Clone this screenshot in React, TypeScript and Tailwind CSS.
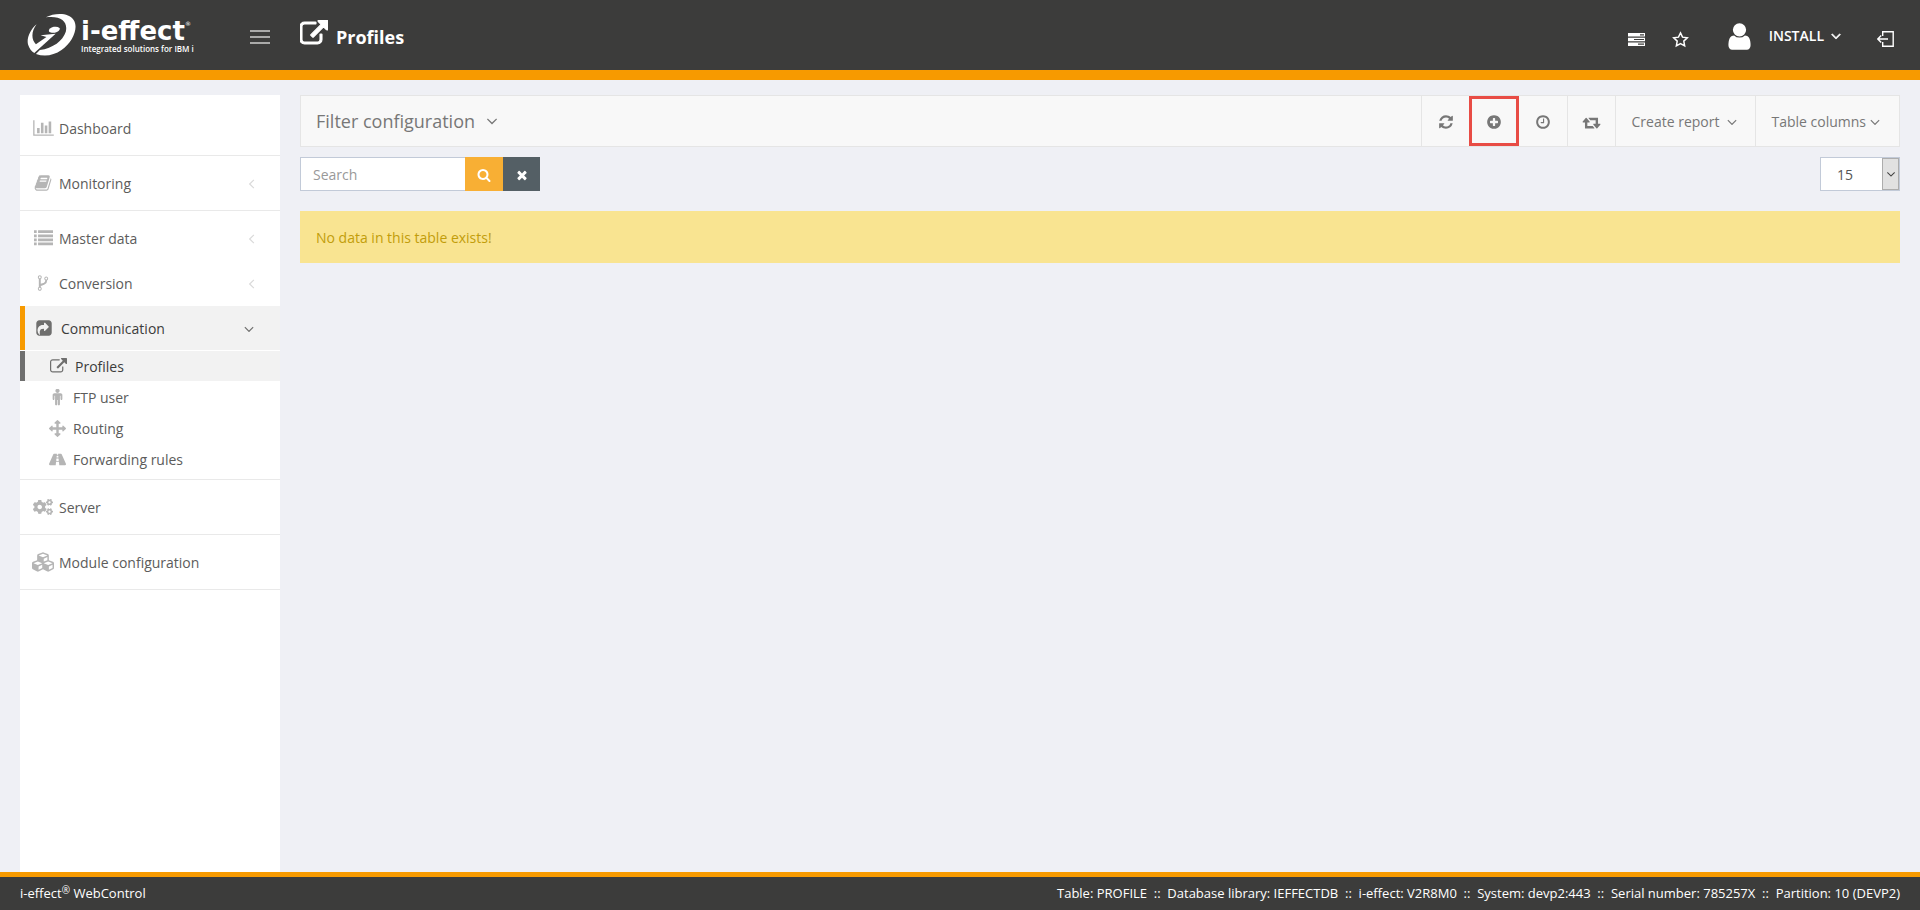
import React from "react";
import { FaCogs, FaCubes, FaRoad } from "react-icons/fa";

const paths = {
  externalLink:
    "M1408 928v320q0 119-84.5 203.5t-203.5 84.5h-832q-119 0-203.5-84.5t-84.5-203.5v-832q0-119 84.5-203.5t203.5-84.5h704q14 0 23 9t9 23v64q0 14-9 23t-23 9h-704q-66 0-113 47t-47 113v832q0 66 47 113t113 47h832q66 0 113-47t47-113v-320q0-14 9-23t23-9h64q14 0 23 9t9 23zm384-864v512q0 26-19 45t-45 19-45-19l-176-176-652 652q-10 10-23 10t-23-10l-114-114q-10-10-10-23t10-23l652-652-176-176q-19-19-19-45t19-45 45-19h512q26 0 45 19t19 45z",
  barChart:
    "M640 896v512h-256v-512h256zm384-512v1024h-256v-1024h256zm1024 1152v128h-2048v-1536h128v1408h1920zm-640-896v768h-256v-768h256zm384-384v1152h-256v-1152h256z",
  book: "M1703 478q40 57 18 129l-275 906q-19 64-76.5 107.5t-122.5 43.5h-923q-77 0-148.5-53.5t-99.5-131.5q-24-67-2-127 0-4 3-27t4-37q1-8-3-21.5t-3-19.5q2-11 8-21t16.5-23.5 16.5-23.5q23-38 45-91.5t30-91.5q3-10 .5-30t-.5-28q3-11 17-28t17-23q21-36 42-92t25-90q1-9-2.5-32t.5-28q4-13 22-30.5t22-22.5q19-26 42.5-84.5t27.5-96.5q1-8-3-25.5t-2-26.5q2-8 9-18t18-23 17-21q8-12 16.5-30.5t15-35 16-36 19.5-32 26.5-23.5 36-11.5 47.5 5.5l-1 3q38-9 51-9h761q74 0 114 56t18 130l-274 906q-36 119-71.5 153.5t-128.5 34.5h-869q-27 0-38 15-11 16-1 43 24 70 144 70h923q29 0 56-15.5t35-41.5l300-987q7-22 5-57 38 15 59 43zm-1064 2q-4 13 2 22.5t20 9.5h608q13 0 25.5-9.5t16.5-22.5l21-64q4-13-2-22.5t-20-9.5h-608q-13 0-25.5 9.5t-16.5 22.5zm-83 256q-4 13 2 22.5t20 9.5h608q13 0 25.5-9.5t16.5-22.5l21-64q4-13-2-22.5t-20-9.5h-608q-13 0-25.5 9.5t-16.5 22.5z",
  list: "M0 128h256v256h-256zM384 128h1408v256h-1408zM0 512h256v256h-256zM384 512h1408v256h-1408zM0 896h256v256h-256zM384 896h1408v256h-1408zM0 1280h256v256h-256zM384 1280h1408v256h-1408z",
  fork: "M672 1472q0-40-28-68t-68-28-68 28-28 68 28 68 68 28 68-28 28-68zm0-1152q0-40-28-68t-68-28-68 28-28 68 28 68 68 28 68-28 28-68zm640 128q0-40-28-68t-68-28-68 28-28 68 28 68 68 28 68-28 28-68zm96 0q0 52-26 96.5t-70 69.5q-2 287-226 414-67 38-203 81-128 40-169.5 71t-41.5 100v26q44 25 70 69.5t26 96.5q0 80-56 136t-136 56-136-56-56-136q0-52 26-96.5t70-69.5v-820q-44-25-70-69.5t-26-96.5q0-80 56-136t136-56 136 56 56 136q0 52-26 96.5t-70 69.5v497q54-26 154-57 55-17 87.5-29.5t70.5-31 59-39.5 40.5-51 28-69.5 8.5-91.5q-44-25-70-69.5t-26-96.5q0-80 56-136t136-56 136 56 56 136z",
  share:
    "M1005 1179l352-352q19-19 19-45t-19-45l-352-352q-30-31-69-14-40 17-40 59v160q-119 0-216 19.5t-162.5 51-114 79-76.5 95.5-44.5 109-21.5 111.5-5 110.5q0 181 167 404 11 12 25 12 7 0 13-3 22-9 19-33-44-354 62-473 46-52 130-75.5t224-23.5v160q0 42 40 59 12 5 24 5 26 0 45-19zM1664 416v960q0 119-84.5 203.5t-203.5 84.5h-960q-119 0-203.5-84.5t-84.5-203.5v-960q0-119 84.5-203.5t203.5-84.5h960q119 0 203.5 84.5t84.5 203.5z",
  male: "M1408 640v416q0 40-28 68t-68 28-68-28-28-68v-352h-64v912q0 46-33 79t-79 33-79-33-33-79v-464h-64v464q0 46-33 79t-79 33-79-33-33-79v-912h-64v352q0 40-28 68t-68 28-68-28-28-68v-416q0-80 56-136t136-56h640q80 0 136 56t56 136zm-288-448q0 93-65.5 158.5t-158.5 65.5-158.5-65.5-65.5-158.5 65.5-158.5 158.5-65.5 158.5 65.5 65.5 158.5z",
  arrows:
    "M1792 896q0 26-19 45l-256 256q-19 19-45 19t-45-19-19-45v-128h-384v384h128q26 0 45 19t19 45-19 45l-256 256q-19 19-45 19t-45-19l-256-256q-19-19-19-45t19-45 45-19h128v-384h-384v128q0 26-19 45t-45 19-45-19l-256-256q-19-19-19-45t19-45l256-256q19-19 45-19t45 19 19 45v128h384v-384h-128q-26 0-45-19t-19-45 19-45l256-256q19-19 45-19t45 19l256 256q19 19 19 45t-19 45-45 19h-128v384h384v-128q0-26 19-45t45-19 45 19l256 256q19 19 19 45z",
  angleDown:
    "M1395 736q0 13-10 23l-466 466q-10 10-23 10t-23-10l-466-466q-10-10-10-23t10-23l50-50q10-10 23-10t23 10l393 393 393-393q10-10 23-10t23 10l50 50q10 10 10 23z",
  refresh:
    "M1639 1056q0 5-1 7-64 268-268 434.5t-478 166.5q-146 0-282.5-55t-243.5-157l-129 129q-19 19-45 19t-45-19-19-45v-448q0-26 19-45t45-19h448q26 0 45 19t19 45-19 45l-137 137q71 66 161 102t187 36q134 0 250-65t186-179q11-17 53-117 8-23 30-23h192q13 0 22.5 9.5t9.5 22.5zm25-800v448q0 26-19 45t-45 19h-448q-26 0-45-19t-19-45 19-45l138-138q-148-137-349-137-134 0-250 65t-186 179q-11 17-53 117-8 23-30 23h-199q-13 0-22.5-9.5t-9.5-22.5v-7q65-268 270-434.5t480-166.5q146 0 284 55.5t245 156.5l130-129q19-19 45-19t45 19 19 45z",
  plusCircle:
    "M1344 960v-128q0-26-19-45t-45-19h-256v-256q0-26-19-45t-45-19h-128q-26 0-45 19t-19 45v256h-256q-26 0-45 19t-19 45v128q0 26 19 45t45 19h256v256q0 26 19 45t45 19h128q26 0 45-19t19-45v-256h256q26 0 45-19t19-45zm320-64q0 209-103 385.5t-279.5 279.5-385.5 103-385.5-103-279.5-279.5-103-385.5 103-385.5 279.5-279.5 385.5-103 385.5 103 279.5 279.5 103 385.5z",
  clock:
    "M1024 544v448q0 14-9 23t-23 9h-320q-14 0-23-9t-9-23v-64q0-14 9-23t23-9h224v-352q0-14 9-23t23-9h64q14 0 23 9t9 23zm416 352q0-148-73-273t-198-198-273-73-273 73-198 198-73 273 73 273 198 198 273 73 273-73 198-198 73-273zm224 0q0 209-103 385.5t-279.5 279.5-385.5 103-385.5-103-279.5-279.5-103-385.5 103-385.5 279.5-279.5 385.5-103 385.5 103 279.5 279.5 103 385.5z",
  retweet:
    "M1344 1504q0 13-9.5 22.5t-22.5 9.5h-960q-8 0-13.5-2t-9-7-5.5-8-3-11.5-1-11.5v-600h-192q-26 0-45-19t-19-45q0-24 15-41l320-384q19-22 49-22t49 22l320 384q15 17 15 41 0 26-19 45t-45 19h-192v384h576q16 0 25 11l160 192q7 10 7 21zm640-416q0 24-15 41l-320 384q-20 23-49 23t-49-23l-320-384q-15-17-15-41 0-26 19-45t45-19h192v-384h-576q-16 0-25-12l-160-192q-7-9-7-20 0-13 9.5-22.5t22.5-9.5h960q8 0 13.5 2t9 7 5.5 8 3 11.5 1 11.5v600h192q26 0 45 19t19 45z",
  search:
    "M1216 832q0-185-131.5-316.5t-316.5-131.5-316.5 131.5-131.5 316.5 131.5 316.5 316.5 131.5 316.5-131.5 131.5-316.5zm512 832q0 52-38 90t-90 38q-54 0-90-38l-343-342q-179 124-399 124-143 0-273.5-55.5t-225-150-150-225-55.5-273.5 55.5-273.5 150-225 225-150 273.5-55.5 273.5 55.5 225 150 150 225 55.5 273.5q0 220-124 399l343 343q37 37 37 90z",
  times:
    "M1490 1322q0 40-28 68l-136 136q-28 28-68 28t-68-28l-294-294-294 294q-28 28-68 28t-68-28l-136-136q-28-28-28-68t28-68l294-294-294-294q-28-28-28-68t28-68l136-136q28-28 68-28t68 28l294 294 294-294q28-28 68-28t68 28l136 136q28 28 28 68t-28 68l-294 294 294 294q28 28 28 68z",
  user: "M1536 1399q0 109-62.5 187t-150.5 78h-854q-88 0-150.5-78t-62.5-187q0-85 8.5-160.5t31.5-152 58.5-131 94-89 134.5-34.5q131 128 313 128t313-128q76 0 134.5 34.5t94 89 58.5 131 31.5 152 8.5 160.5zm-256-887q0 159-112.5 271.5t-271.5 112.5-271.5-112.5-112.5-271.5 112.5-271.5 271.5-112.5 271.5 112.5 112.5 271.5z",
};

type IconName = keyof typeof paths;

function Icon({
  name,
  className,
  wide = false,
  bold = false,
}: {
  name: IconName;
  className: string;
  wide?: boolean;
  bold?: boolean;
}) {
  return (
    <svg
      viewBox={wide ? "0 0 2048 1792" : "0 0 1792 1792"}
      className={`shrink-0 ${className}`}
      fill="currentColor"
      fillRule="evenodd"
      stroke={bold ? "currentColor" : "none"}
      strokeWidth={70}
      aria-hidden="true"
    >
      <path d={paths[name]} />
    </svg>
  );
}

function Logo() {
  return (
    <a href="#home" className="flex w-[210px] shrink-0 items-center text-white" aria-label="i-effect home">
      <svg viewBox="0 0 150 128" className="h-[42px] w-[50px] shrink-0" fill="currentColor" aria-hidden="true">
        <path d="M56 10C84-4 126-5 141 18C157 42 138 86 104 110C80 127 52 131 26 122L38 110C78 104 108 82 117 54C124 24 104 4 56 10Z" />
        <path d="M28 31C8 48-3 74 2 93C5 104 12 113 21 119L86 60L40 65L58 70L26 92C10 76 13 50 28 31Z" />
        <ellipse cx="82" cy="48" rx="17" ry="9" transform="rotate(-12 82 48)" />
      </svg>
      <span className="ml-1 flex flex-col pt-1">
        <span className="flex items-start font-['DejaVu_Sans'] text-[26px] leading-5 font-bold">
          i-effect<span className="text-[6px] leading-[6px] font-normal">®</span>
        </span>
        <span className="mt-1 text-[8px] leading-2 font-semibold whitespace-nowrap">
          Integrated solutions for IBM i
        </span>
      </span>
    </a>
  );
}

function Header() {
  return (
    <header className="flex h-20 items-center border-b-10 border-[#f79a00] bg-[#3c3c3b] pr-[26px] pl-[27px] text-white">
      <Logo />
      <button type="button" aria-label="Toggle menu" className="ml-[13px] flex w-5 flex-col gap-1 pt-1">
        <span className="h-0.5 w-full bg-[#aaaaa9]" />
        <span className="h-0.5 w-full bg-[#aaaaa9]" />
        <span className="h-0.5 w-full bg-[#aaaaa9]" />
      </button>
      <h1 className="ml-[30px] flex items-center gap-2 text-lg font-bold">
        <Icon name="externalLink" className="mb-0.5 size-7" bold />
        <span className="pt-1">Profiles</span>
      </h1>
      <nav className="ml-auto flex items-center" aria-label="User">
        <button type="button" aria-label="Tasks" className="pt-2">
          <svg viewBox="0 0 17 13" className="h-[13px] w-[17px]" fill="currentColor" aria-hidden="true">
            <path fillRule="evenodd" d="M0 0h17v3.6H0zM12 1.2v1.2h4V1.2zM0 4.7h17v3.6H0zM6 5.9v1.2h10V5.9zM0 9.4h17V13H0zM10 10.6v1.2h6v-1.2z" />
          </svg>
        </button>
        <button type="button" aria-label="Favourites" className="ml-[27px] pt-2">
          <svg viewBox="0 0 16 16" className="size-[17px]" fill="none" stroke="currentColor" strokeWidth="1.4" aria-hidden="true">
            <path d="M8 1.8l1.9 4 4.5.6-3.3 3.1.8 4.5L8 11.9 4.1 14l.8-4.5L1.6 6.4l4.5-.6z" />
          </svg>
        </button>
        <button type="button" className="ml-[35px] flex items-center pt-0.5 text-sm font-semibold">
          <Icon name="user" className="size-[31px]" />
          <span className="ml-[14px]">INSTALL</span>
          <Icon name="angleDown" className="ml-1 size-4" bold />
        </button>
        <button type="button" aria-label="Log out" className="ml-[33px] pt-2">
          <svg viewBox="0 0 17 16" className="h-4 w-[17px]" fill="none" stroke="currentColor" strokeWidth="1.4" aria-hidden="true">
            <path d="M5.7 5V.8h10.5v14.4H5.7V11M.8 8H11M4.2 4.5L.8 8l3.4 3.5" />
          </svg>
        </button>
      </nav>
    </header>
  );
}

function NavItem({
  icon,
  label,
  chevron,
  active,
}: {
  icon: React.ReactNode;
  label: string;
  chevron?: boolean;
  active?: boolean;
}) {
  return (
    <a
      href="#section"
      className={
        active
          ? "flex h-11 items-center border-l-5 border-[#f79a00] bg-[#f2f2f2] pr-[23px] pl-2 text-[#3c3c3b]"
          : "flex h-11 items-center pr-5 pl-3 text-[#5c5c5b]"
      }
    >
      <span className={active ? "flex w-[22px] justify-center text-[#6f6f6e]" : "flex w-[22px] justify-center text-[#b5b5b5]"}>
        {icon}
      </span>
      <span className={active ? "ml-1.5 flex-1 pt-0.5" : "ml-[5px] flex-1 pt-0.5"}>{label}</span>
      {chevron && (
        <span className="pt-0.5">
          <Icon name="angleDown" className={active ? "size-4 text-[#6f6f6e]" : "size-4 rotate-90 text-[#dadada]"} />
        </span>
      )}
    </a>
  );
}

function SubItem({ icon, label, active }: { icon: React.ReactNode; label: string; active?: boolean }) {
  return (
    <a
      href="#page"
      className={
        active
          ? "flex h-[30px] items-center border-l-5 border-[#6f6f6e] bg-[#f2f2f2] pl-6 text-[#3c3c3b]"
          : "flex h-[30px] items-center pl-7 text-[#5c5c5b]"
      }
    >
      <span className={active ? "flex w-[18px] justify-center text-[#6f6f6e]" : "flex w-[18px] justify-center text-[#b5b5b5]"}>
        {icon}
      </span>
      <span className={active ? "ml-2 pt-0.5" : "ml-[7px] pt-0.5"}>{label}</span>
    </a>
  );
}

const group = "border-b border-[#e9e9e9] py-[5px]";

function Sidebar() {
  return (
    <nav className="w-[260px] shrink-0 bg-white pt-1.5" aria-label="Main">
      <div className={group}>
        <NavItem icon={<Icon name="barChart" wide className="h-[18px] w-[21px]" />} label="Dashboard" />
      </div>
      <div className={group}>
        <NavItem icon={<Icon name="book" className="size-[18px]" />} label="Monitoring" chevron />
      </div>
      <div className="flex flex-col gap-px border-b border-[#e9e9e9] py-[5px]">
        <NavItem icon={<Icon name="list" className="size-[19px]" />} label="Master data" chevron />
        <NavItem icon={<Icon name="fork" className="size-[18px]" />} label="Conversion" chevron />
        <NavItem icon={<Icon name="share" className="size-[18px]" />} label="Communication" chevron active />
        <SubItem icon={<Icon name="externalLink" className="size-[17px]" />} label="Profiles" active />
        <SubItem icon={<Icon name="male" className="size-[17px]" />} label="FTP user" />
        <SubItem icon={<Icon name="arrows" className="size-[17px]" />} label="Routing" />
        <SubItem icon={<FaRoad className="size-[17px]" />} label="Forwarding rules" />
      </div>
      <div className={group}>
        <NavItem icon={<FaCogs className="size-5" />} label="Server" />
      </div>
      <div className={group}>
        <NavItem icon={<FaCubes className="size-[22px]" />} label="Module configuration" />
      </div>
    </nav>
  );
}

function Toolbar() {
  const cell = "flex items-center justify-center border-l border-[#e5e5e5] pt-0.5";
  return (
    <div className="flex h-[52px] items-stretch border border-[#e5e5e5] bg-[#f8f8f8] text-[#777777]">
      <button type="button" className="mr-auto flex items-center gap-2 pl-[15px] text-lg">
        Filter configuration
        <Icon name="angleDown" className="size-[18px]" />
      </button>
      <button type="button" aria-label="Refresh" className={`${cell} w-12`}>
        <Icon name="refresh" className="size-4" />
      </button>
      <button type="button" aria-label="Add" className="flex w-[50px] items-center justify-center border-3 border-[#e84c45] pt-0.5">
        <Icon name="plusCircle" className="size-4" />
      </button>
      <button type="button" aria-label="Schedule" className="flex w-12 items-center justify-center pt-0.5">
        <Icon name="clock" className="size-4" />
      </button>
      <button type="button" aria-label="Transfer" className={`${cell} w-12`}>
        <Icon name="retweet" wide className="h-[17px] w-[19px]" />
      </button>
      <button type="button" className={`${cell} gap-[5px] px-[15px] text-sm`}>
        Create report
        <Icon name="angleDown" className="size-4" />
      </button>
      <button type="button" className={`${cell} gap-px pr-4 pl-[15px] text-sm`}>
        Table columns
        <Icon name="angleDown" className="size-4" />
      </button>
    </div>
  );
}

function Content() {
  return (
    <main className="min-w-0 flex-1">
      <Toolbar />
      <div className="mt-2.5 flex justify-between">
        <form className="flex h-[34px]" role="search" onSubmit={(e) => e.preventDefault()}>
          <input
            type="text"
            aria-label="Search"
            placeholder="Search"
            className="w-[165px] border border-r-0 border-[#c2cad8] bg-white px-3 pt-0.5 text-sm text-[#555555] outline-none placeholder:text-[#999999]"
          />
          <button type="submit" aria-label="Run search" className="flex w-[38px] items-center justify-center bg-[#f8af34] pt-0.5 text-white">
            <Icon name="search" className="size-[14px]" />
          </button>
          <button type="reset" aria-label="Clear search" className="flex w-[37px] items-center justify-center bg-[#545f65] pt-0.5 text-white">
            <Icon name="times" className="size-[14px]" />
          </button>
        </form>
        <div className="relative h-[34px] w-20">
          <select
            aria-label="Rows per page"
            defaultValue="15"
            className="h-full w-full appearance-none border border-[#c2cad8] bg-white pt-0.5 pl-4 text-sm text-[#555555]"
          >
            <option>15</option>
            <option>25</option>
            <option>50</option>
          </select>
          <span className="pointer-events-none absolute top-px right-px bottom-px flex w-[17px] items-center justify-center border border-[#adadad] bg-[#e1e1e1] text-[#404040]">
            <Icon name="angleDown" className="size-[14px]" />
          </span>
        </div>
      </div>
      <p role="status" className="mt-5 flex h-[52px] items-center bg-[#f9e491] px-4 pt-0.5 text-sm text-[#c29d0b]">
        No data in this table exists!
      </p>
    </main>
  );
}

const status = [
  "Table: PROFILE",
  "Database library: IEFFECTDB",
  "i-effect: V2R8M0",
  "System: devp2:443",
  "Serial number: 785257X",
  "Partition: 10 (DEVP2)",
];

export default function App() {
  return (
    <div className="flex min-h-screen flex-col bg-[#eff0f5] font-['Open_Sans',sans-serif] text-sm">
      <Header />
      <div className="flex flex-1 items-stretch gap-5 px-5 pt-[15px]">
        <Sidebar />
        <Content />
      </div>
      <footer className="flex h-[38px] items-center justify-between border-t-5 border-[#f79a00] bg-[#3c3c3b] px-5 text-[13px] text-white">
        <span>
          i-effect<sup className="-top-1 align-baseline text-[10px]">®</sup> WebControl
        </span>
        <span className="whitespace-pre">{status.join("  ::  ")}</span>
      </footer>
    </div>
  );
}
